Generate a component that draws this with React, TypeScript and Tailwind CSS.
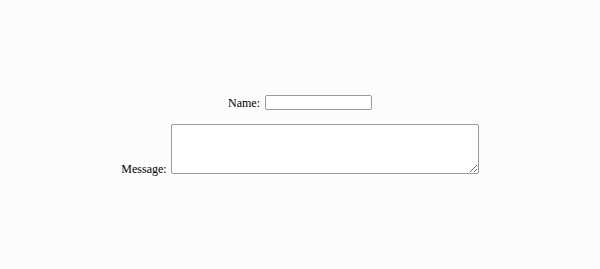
import React from "react";

const App = () => {
  return (
    <div className="w-full h-[269px] bg-[#fdfcfd] flex flex-col items-center justify-center gap-[14px] text-[12px] text-black font-['Liberation_Serif',serif]">
      <div className="flex items-center">
        <label htmlFor="name" className="leading-none">
          Name:
        </label>
        <input
          id="name"
          type="text"
          className="ml-[5px] w-[107px] h-[15px] bg-white border border-[#9a9a9a] rounded-[2px] outline-none"
        />
      </div>
      <div className="flex items-end">
        <label htmlFor="message" className="leading-none mb-[-1px]">
          Message:
        </label>
        <textarea
          id="message"
          className="ml-[4px] w-[308px] h-[50px] bg-white border border-[#9a9a9a] rounded-[2px] outline-none resize"
        />
      </div>
    </div>
  );
};

export default App;
